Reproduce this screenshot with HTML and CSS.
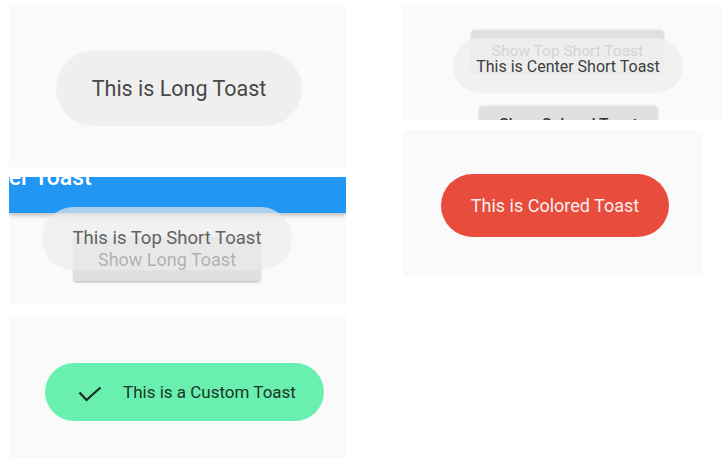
FILE: index.html
```html
<!DOCTYPE html>
<html lang="en">
<head>
<meta charset="utf-8">
<title>Flutter Toast</title>
<link rel="stylesheet" href="styles.css">
</head>
<body>
<div class="page">
  <div class="col col-left">
    <section class="panel p-long">
      <div class="toast toast-long">This is Long Toast</div>
    </section>
    <section class="panel p-top">
      <header class="appbar"><span class="appbar-title">Flutter Toast</span></header>
      <div class="btn btn-long">Show Long Toast</div>
      <div class="toast toast-top">This is Top Short Toast</div>
    </section>
    <section class="panel p-custom">
      <div class="toast toast-custom">
        <svg class="check" width="24" height="16" viewBox="0 0 24 16" aria-hidden="true">
          <polyline points="1.5,6.5 8.5,14 22.5,1.5" fill="none" stroke="#1e2a24" stroke-width="2.3" stroke-linecap="butt" stroke-linejoin="miter"/>
        </svg>
        <span class="custom-text">This is a Custom Toast</span>
      </div>
    </section>
  </div>
  <div class="col col-right">
    <section class="panel p-center">
      <div class="btn btn-top">Show Top Short Toast</div>
      <div class="btn btn-colored">Show Colored Toast</div>
      <div class="toast toast-center">This is Center Short Toast</div>
    </section>
    <section class="panel p-colored">
      <div class="toast toast-colored">This is Colored Toast</div>
    </section>
  </div>
</div>
</body>
</html>
```
FILE: styles.css
```css
html, body {
  margin: 0;
  padding: 0;
  background: #ffffff;
}
body {
  font-family: Roboto, "Noto Sans", "Liberation Sans", sans-serif;
  color: #4d4d4d;
}
.page {
  display: flex;
  gap: 57px;
  padding: 5px 0 0 9px;
  height: 458px;
  box-sizing: border-box;
  overflow: hidden;
}
.col {
  display: flex;
  flex-direction: column;
  gap: 10px;
}
.col-left { width: 337px; }
.col-right { width: 320px; }

.panel {
  background: #fafafa;
  position: relative;
  overflow: hidden;
  display: flex;
  flex-direction: column;
  align-items: flex-start;
  flex: none;
}

.toast {
  display: flex;
  align-items: center;
  justify-content: center;
  box-sizing: border-box;
  white-space: nowrap;
  flex: none;
}

/* Panel 1: long toast */
.p-long { height: 162px; padding: 46px 0 0 47px; box-sizing: border-box; }
.toast-long {
  width: 246px;
  height: 75px;
  border-radius: 38px;
  background: #efefef;
  font-size: 21.5px;
  color: #484848;
}

/* Panel 3: top toast */
.p-top { height: 128px; }
.appbar {
  align-self: stretch;
  height: 36px;
  background: #2196f3;
  box-shadow: 0 2px 5px rgba(0, 0, 0, 0.28);
  position: relative;
  z-index: 1;
  overflow: hidden;
  flex: none;
}
.appbar-title {
  display: block;
  margin: -13px 0 0 -47px;
  font-size: 23px;
  font-weight: 500;
  color: #ffffff;
  white-space: nowrap;
}
.btn {
  display: flex;
  align-items: center;
  justify-content: center;
  box-sizing: border-box;
  background: #e0e0e0;
  border-radius: 2px;
  box-shadow: 0 1px 3px rgba(0, 0, 0, 0.3);
  color: rgba(0, 0, 0, 0.8);
  white-space: nowrap;
  flex: none;
}
.btn-long {
  margin: 24px 0 0 65px;
  width: 186px;
  height: 44px;
  font-size: 18px;
}
.toast-top {
  position: absolute;
  left: 33px;
  top: 30px;
  z-index: 2;
  width: 250px;
  height: 63px;
  border-radius: 32px;
  background: rgba(236, 236, 236, 0.68);
  font-size: 18.5px;
  color: #636363;
  align-items: flex-start;
  padding-top: 20px;
}

/* Panel 4: custom toast */
.p-custom { height: 150px; padding: 48px 0 0 36px; box-sizing: border-box; }
.toast-custom {
  width: 279px;
  height: 58px;
  border-radius: 29px;
  background: #69f0ae;
  justify-content: flex-start;
  padding-left: 33px;
}
.check {
  display: block;
  margin-top: 4px;
  flex: none;
}
.custom-text {
  margin-left: 21px;
  font-size: 17px;
  color: #1c3528;
}

/* Panel 2: center toast */
.p-center { height: 115px; width: 320px; }
.btn-top {
  margin: 25px 0 0 69px;
  width: 191px;
  height: 42px;
  font-size: 15.5px;
}
.btn-colored {
  margin: 34px 0 0 77px;
  width: 177px;
  height: 36px;
  font-size: 15.5px;
  font-weight: 500;
}
.toast-center {
  position: absolute;
  left: 50px;
  top: 33px;
  width: 230px;
  height: 55px;
  border-radius: 28px;
  background: rgba(238, 238, 238, 0.85);
  font-size: 16px;
  color: #3d3d3d;
  align-items: flex-start;
  padding-top: 19px;
}

/* Panel 5: colored toast */
.p-colored { height: 146px; width: 300px; padding: 44px 0 0 38px; box-sizing: border-box; }
.toast-colored {
  width: 228px;
  height: 63px;
  border-radius: 32px;
  background: #e74c3c;
  font-size: 18px;
  color: #fbeeee;
}
```
